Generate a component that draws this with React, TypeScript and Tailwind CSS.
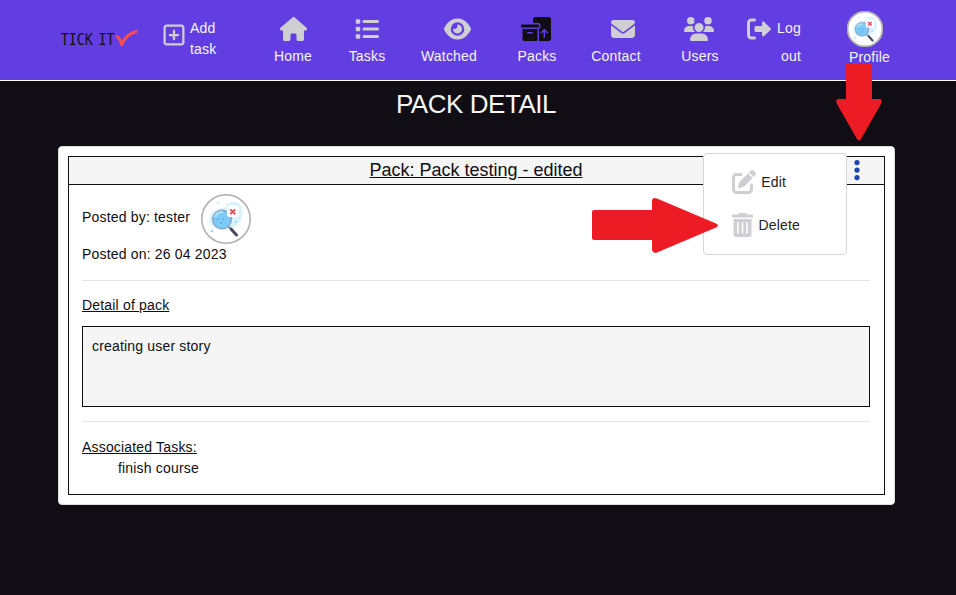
import type { ReactNode } from "react";
import {
  FaBoxesPacking,
  FaEllipsisVertical,
  FaEnvelope,
  FaEye,
  FaHouse,
  FaList,
  FaPenToSquare,
  FaRegSquarePlus,
  FaUsers,
} from "react-icons/fa6";

function Logo() {
  return (
    <svg width="80" height="24" viewBox="0 0 80 24" className="block">
      <g fill="#100e14" fontSize="16.4" fontFamily="'DejaVu Sans Mono', monospace">
        <text x="0.7" y="18" textLength="32" letterSpacing="0" lengthAdjust="spacingAndGlyphs">TICK</text>
        <text x="38.4" y="18" textLength="16" letterSpacing="0" lengthAdjust="spacingAndGlyphs">IT</text>
      </g>
      <path d="M57.300 9.500C59.500 11.500 61 14.500 61.700 17.500C64.500 10.500 69 6.500 76.200 4.500" fill="none" stroke="#ff4d4d" strokeWidth="3" strokeLinecap="round" strokeLinejoin="round" />
    </svg>
  );
}

function LogOutIcon({ className }: { className: string }) {
  return (
    <svg viewBox="0 0 512 512" fill="currentColor" className={className}>
      <path d="M96 480h64c17.670 0 32-14.330 32-32s-14.330-32-32-32H96c-17.670 0-32-14.330-32-32V128c0-17.670 14.330-32 32-32h64c17.670 0 32-14.330 32-32s-14.330-32-32-32H96C42.980 32 0 74.980 0 128v256C0 437 42.980 480 96 480z" />
      <path d="M504.800 238.500l-144.100-136c-6.975-6.578-17.200-8.375-26-4.594c-8.803 3.797-14.510 12.470-14.510 22.050l-.092 72h-128c-17.690 0-32.020 14.330-32.020 32v64c0 17.670 14.340 32 32.020 32h128l.092 71.100c0 9.578 5.707 18.250 14.510 22.050c8.803 3.781 19.030 1.984 26-4.594l144.100-136C514.400 264.400 514.400 247.600 504.800 238.500z" />
    </svg>
  );
}

function TrashIcon({ className }: { className: string }) {
  return (
    <svg viewBox="0 0 448 512" fill="currentColor" className={className}>
      <path
        fillRule="evenodd"
        d="M32 464C32 490.500 53.500 512 80 512h288c26.500 0 48-21.500 48-48V128H32V464zM304 208a16 16 0 0 1 32 0v224a16 16 0 0 1-32 0zM208 208a16 16 0 0 1 32 0v224a16 16 0 0 1-32 0zM112 208a16 16 0 0 1 32 0v224a16 16 0 0 1-32 0z"
      />
      <path d="M432 32H320l-11.600-23.200C305.700 3.400 300.200 0 294.100 0H153.900c-6.100 0-11.600 3.400-14.300 8.800L128 32H16C7.200 32 0 39.200 0 48v32c0 8.800 7.200 16 16 16h416c8.800 0 16-7.200 16-16V48c0-8.800-7.200-16-16-16z" />
    </svg>
  );
}

function Avatar({ size }: { size: number }) {
  return (
    <svg width={size} height={size} viewBox="0 0 50 50" className="block shrink-0">
      <circle cx="25" cy="25" r="24.200" fill="#fff" stroke="#b1b0b5" strokeWidth={size < 40 ? 2.4 : 1.600} />
      <path d="M9 29C6 21 14 13 24 14C26 7 38 5 41 14C43 21 39 32 31 34C23 37 12 35 9 29Z" fill="#d9f3fb" />
      <circle cx="17" cy="9" r="0.9" fill="#a5e2f5" />
      <circle cx="11" cy="37" r="1.200" fill="#8bdcf2" />
      <circle cx="35" cy="28" r="0.9" fill="#8bcde8" />
      <circle cx="21" cy="25.500" r="9.300" fill="#7dcbf8" stroke="#8ca8cd" strokeWidth="1.500" />
      <path d="M14 23a8 8 0 0 1 8-5" fill="none" stroke="#b2e6ff" strokeWidth="2" />
      <path d="M17 24.500v1.500M22.500 24.500v1.500M19 29h2" stroke="#4a8fc8" strokeWidth="1.200" />
      <path d="m27.500 32.500 2 2" stroke="#8a98ad" strokeWidth="2" />
      <path d="m30 35 5.500 6" stroke="#454b5d" strokeWidth="3" strokeLinecap="round" />
      <rect x="26" y="11.500" width="12" height="11.500" rx="2.500" fill="#fff" />
      <path d="m29.300 15.300 4.900 4.900m0-4.900-4.900 4.900" stroke="#e5484f" strokeWidth="1.800" />
    </svg>
  );
}

function NavItem({ icon, label, className }: { icon: ReactNode; label: string; className: string }) {
  return (
    <a className={`flex shrink-0 flex-col items-center pt-4 ${className}`}>
      <span className="flex h-[25px] items-center text-[#cfced3]">{icon}</span>
      <span className="mt-[5px] whitespace-nowrap leading-[21px]">{label}</span>
    </a>
  );
}

function Navbar() {
  return (
    <nav className="flex h-[81px] items-start border-b border-white bg-[#623ee2] text-[#f5f5f5]">
      <a className="ml-[60px] mt-[27px] w-[80px] shrink-0"><Logo /></a>
      <a className="ml-[23px] mt-[18px] flex w-[65px] shrink-0 items-start leading-[21px]">
        <FaRegSquarePlus className="mt-[5px] h-6 w-[22px] shrink-0 text-[#cfced3]" />
        <span className="ml-[5px] w-[30px]">Add task</span>
      </a>
      <NavItem className="ml-[45px] w-[40px]" icon={<FaHouse className="h-6 w-[27px]" />} label="Home" />
      <NavItem className="ml-[34px] w-[40px]" icon={<FaList className="size-6" />} label="Tasks" />
      <NavItem className="ml-[33px] w-[58px]" icon={<FaEye className="ml-[17px] h-6 w-[27px]" />} label="Watched" />
      <NavItem className="ml-[39px] w-[40px]" icon={<FaBoxesPacking className="-ml-[2px] h-6 w-[30px] text-[#100e14]" />} label="Packs" />
      <NavItem className="ml-[33px] w-[52px]" icon={<FaEnvelope className="ml-[14px] size-6" />} label="Contact" />
      <NavItem className="ml-[38px] w-[40px]" icon={<FaUsers className="-ml-[3px] h-6 w-[30px]" />} label="Users" />
      <a className="ml-[27px] mt-4 flex w-[55px] shrink-0 items-start">
        <LogOutIcon className="mt-[0.5px] size-6 shrink-0 text-[#cfced3]" />
        <span className="-mt-[2px] w-[30px] text-right leading-[28px]">Log out</span>
      </a>
      <a className="ml-[45px] mt-[11px] shrink-0">
        <Avatar size={36} />
        <span className="ml-[2px] block leading-[21px]">Profile</span>
      </a>
    </nav>
  );
}

function ActionsMenu() {
  return (
    <div className="absolute left-[703px] top-[153px] h-[102px] w-[144px] rounded-[4px] border border-[#d6d6d8] bg-white text-[#212529]">
      <a className="ml-[27.6px] mt-4 flex h-6 items-center">
        <FaPenToSquare className="size-6 text-[#cfced3]" />
        <span className="ml-[5.6px]">Edit</span>
      </a>
      <a className="ml-[28px] mt-[19px] flex h-6 items-center">
        <TrashIcon className="h-6 w-[21px] text-[#cfced3]" />
        <span className="ml-[5.400px]">Delete</span>
      </a>
    </div>
  );
}

export default function App() {
  return (
    <div className="relative h-[595px] w-[956px] overflow-hidden bg-[#100e14] font-['Liberation_Sans',Arial,sans-serif] text-[14px] leading-[21px] tracking-[0.18px] text-[#100e14]">
      <Navbar />
      <h1 className="mt-[6px] pr-[4px] text-center text-[26px] leading-[34px] tracking-[-0.45px] text-[#f5f5f5]">PACK DETAIL</h1>
      <main className="ml-[58px] mt-[25px] h-[359px] w-[837px] rounded-[4px] border border-[#dedee0] bg-white px-[9px] py-[9px]">
        <section className="h-[339px] w-[817px] border border-[#100e14]">
          <header className="flex h-7 items-center border-b border-[#100e14] bg-[#f5f5f5]">
            <h2 className="flex-1 pl-[38px] text-center text-[18px] leading-[27px] tracking-normal underline">Pack: Pack testing - edited</h2>
            <button className="mr-[19px] w-5 text-[#1f43b5]">
              <FaEllipsisVertical className="mx-auto -mt-px size-6" />
            </button>
          </header>
          <div className="pl-[13px] pr-[14px] pt-[9px]">
            <div className="flex items-center">
              <span className="-mt-[3px] w-[119px]">Posted by: tester</span>
              <Avatar size={50} />
            </div>
            <p>Posted on: 26 04 2023</p>
            <hr className="mt-[15px] border-[#e3e3e4]" />
            <h3 className="mt-[14px] underline">Detail of pack</h3>
            <div className="mt-[10px] h-[81px] border border-[#100e14] bg-[#f5f5f5] px-[9px] py-[9px]">creating user story</div>
            <hr className="mt-[14px] border-[#e3e3e4]" />
            <h3 className="mt-[15px] underline">Associated Tasks:</h3>
            <p className="pl-9">finish course</p>
          </div>
        </section>
      </main>
      <ActionsMenu />
      <svg className="absolute left-[836px] top-[63px]" width="46" height="78" viewBox="0 0 46 78" fill="#ed1c24">
        <path d="M11 0H35Q36 0 36 1V36H44Q47 37 45 41L25 76Q23 79 21 76L1 41Q-1 37 2 36H10V1Q10 0 11 0Z" />
      </svg>
      <svg className="absolute left-[592px] top-[197px]" width="127" height="57" viewBox="0 0 127 57" fill="#ed1c24">
        <path d="M2 13H60V3Q61 0 65 1.500L124 26.500Q128 28.500 124 30.500L65 55.500Q61 57 60 53V43H2Q0 43 0 41V15Q0 13 2 13Z" />
      </svg>
    </div>
  );
}
